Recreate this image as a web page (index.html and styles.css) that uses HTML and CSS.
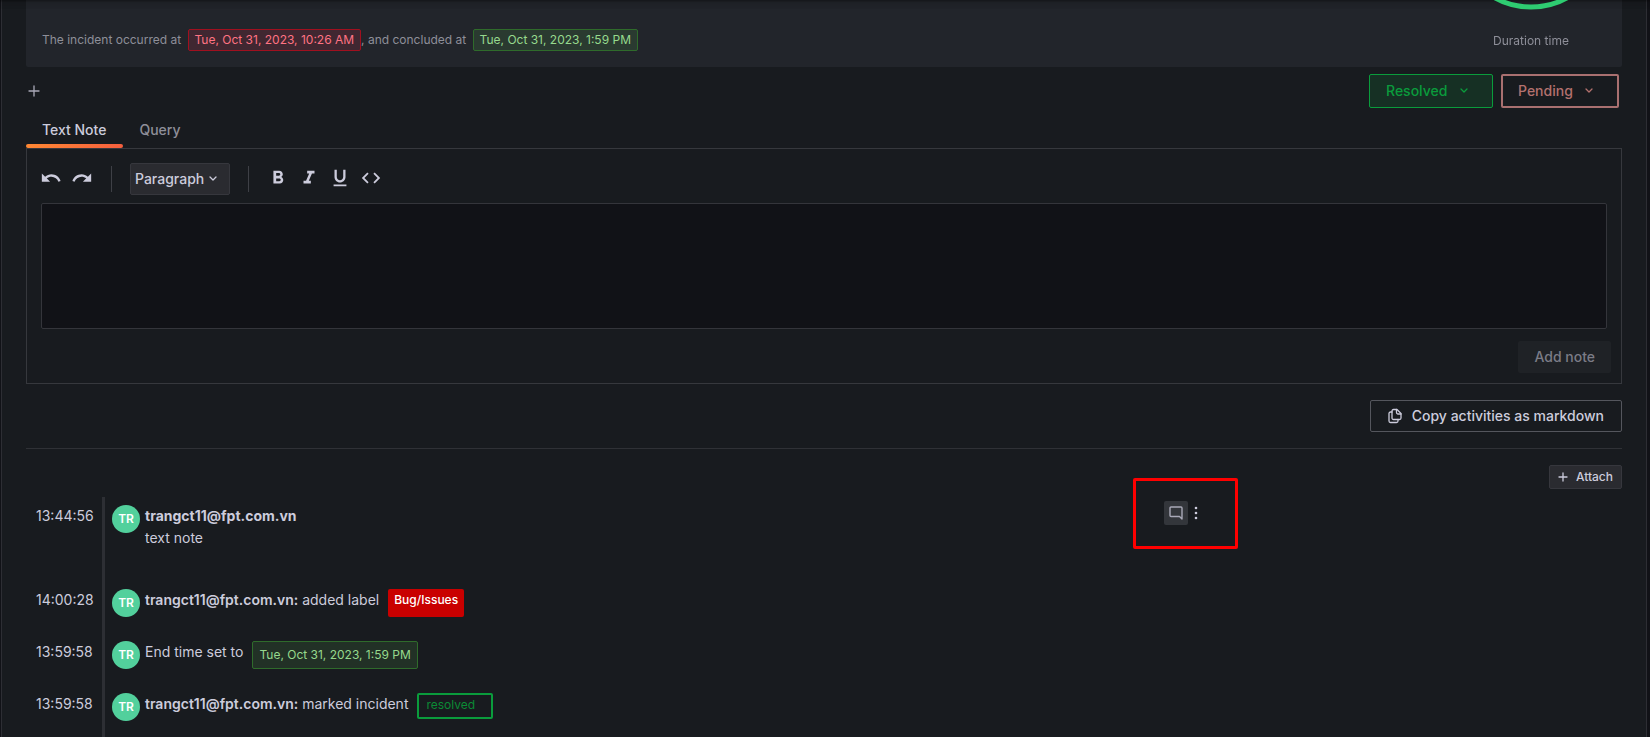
FILE: index.html
```html
<!DOCTYPE html>
<html lang="en">
<head>
    <meta charset="UTF-8">
    <meta name="viewport" content="width=device-width, initial-scale=1.0">
    <title>Incident</title>
    <link rel="stylesheet" href="styles.css">
</head>
<body>
    <main class="page">
        <section class="summary">
            <p class="summary-text">The incident occurred at <span class="date date-start">Tue, Oct 31, 2023, 10:26 AM</span>, and concluded at <span class="date date-end">Tue, Oct 31, 2023, 1:59 PM</span></p>
            <div class="duration">
                <svg class="gauge" width="80" height="10" viewBox="0 0 80 10"><circle cx="40" cy="-67" r="74" fill="none" stroke="#2ecc71" stroke-width="5"/></svg>
                <span>Duration time</span>
            </div>
        </section>

        <div class="actions">
            <button class="icon-button" aria-label="Add label">
                <svg width="12" height="12" viewBox="0 0 12 12"><path d="M6 1v10M1 6h10" stroke="currentColor" stroke-width="1.3" stroke-linecap="round"/></svg>
            </button>
            <div class="statuses">
                <div class="picker picker-resolved">
                    <select aria-label="Status"><option>Resolved</option></select>
                    <svg width="8" height="6" viewBox="0 0 8 6"><path d="M1 1l3 3 3-3" fill="none" stroke="currentColor" stroke-width="1.3" stroke-linecap="round" stroke-linejoin="round"/></svg>
                </div>
                <div class="picker picker-pending">
                    <select aria-label="Severity"><option>Pending</option></select>
                    <svg width="8" height="6" viewBox="0 0 8 6"><path d="M1 1l3 3 3-3" fill="none" stroke="currentColor" stroke-width="1.3" stroke-linecap="round" stroke-linejoin="round"/></svg>
                </div>
            </div>
        </div>

        <nav class="tabs">
            <button class="tab active">Text Note</button>
            <button class="tab">Query</button>
        </nav>

        <section class="note-panel">
            <div class="toolbar">
                <div class="tool-group">
                    <button class="tool" aria-label="Undo"><svg viewBox="0 0 24 24"><path d="M12.5 8c-2.65 0-5.05.99-6.9 2.6L2 7v9h9l-3.62-3.62c1.39-1.16 3.16-1.88 5.12-1.88 3.54 0 6.55 2.31 7.6 5.5l2.37-.78C21.08 11.03 17.15 8 12.5 8z"/></svg></button>
                    <button class="tool" aria-label="Redo"><svg viewBox="0 0 24 24"><path d="M18.4 10.6C16.55 8.99 14.15 8 11.5 8c-4.65 0-8.58 3.03-9.96 7.22L3.9 16c1.05-3.19 4.05-5.5 7.6-5.5 1.95 0 3.73.72 5.12 1.88L13 16h9V7l-3.6 3.6z"/></svg></button>
                </div>
                <span class="divider"></span>
                <div class="picker picker-block">
                    <select aria-label="Block type"><option>Paragraph</option></select>
                    <svg width="8" height="6" viewBox="0 0 8 6"><path d="M1 1l3 3 3-3" fill="none" stroke="currentColor" stroke-width="1.3" stroke-linecap="round" stroke-linejoin="round"/></svg>
                </div>
                <span class="divider"></span>
                <div class="tool-group">
                    <button class="tool" aria-label="Bold"><svg viewBox="0 0 24 24"><path d="M15.6 10.79c.97-.67 1.65-1.77 1.65-2.79 0-2.26-1.75-4-4-4H7v14h7.04c2.09 0 3.71-1.7 3.71-3.79 0-1.52-.86-2.82-2.15-3.42zM10 6.5h3c.83 0 1.5.67 1.5 1.5s-.67 1.5-1.5 1.5h-3v-3zm3.5 9H10v-3h3.5c.83 0 1.5.67 1.5 1.5s-.67 1.5-1.5 1.5z"/></svg></button>
                    <button class="tool" aria-label="Italic"><svg viewBox="0 0 24 24"><path d="M10 4v3h2.21l-3.42 8H6v3h8v-3h-2.21l3.42-8H18V4z"/></svg></button>
                    <button class="tool" aria-label="Underline"><svg viewBox="0 0 24 24"><path d="M12 17c3.31 0 6-2.69 6-6V3h-2.5v8c0 1.93-1.57 3.5-3.5 3.5S8.5 12.93 8.5 11V3H6v8c0 3.31 2.69 6 6 6zm-7 2v2h14v-2H5z"/></svg></button>
                    <button class="tool" aria-label="Code"><svg viewBox="0 0 24 24"><path d="M9.4 16.6L4.8 12l4.6-4.6L8 6l-6 6 6 6 1.4-1.4zm5.2 0l4.6-4.6-4.6-4.6L16 6l6 6-6 6-1.4-1.4z"/></svg></button>
                </div>
            </div>
            <textarea class="editor" aria-label="Note"></textarea>
            <button class="button add-note" disabled>Add note</button>
        </section>

        <div class="copy-row">
            <button class="button copy">
                <svg width="14" height="16" viewBox="0 0 14 16" fill="none" stroke="currentColor" stroke-width="1.3" stroke-linejoin="round" stroke-linecap="round"><path d="M5.5 1.5h3.5l4 4v4.5a1.5 1.5 0 0 1-1.5 1.5h-6A1.5 1.5 0 0 1 4 10V3a1.5 1.5 0 0 1 1.5-1.5z"/><path d="M8.5 1.5v3a1.5 1.5 0 0 0 1.5 1.5h3"/><path d="M4 4H2.5A1.5 1.5 0 0 0 1 5.5V13a1.5 1.5 0 0 0 1.5 1.5h6A1.5 1.5 0 0 0 10 13v-1.5"/></svg>
                Copy activities as markdown
            </button>
        </div>

        <div class="attach-row">
            <button class="button attach">
                <svg width="10" height="10" viewBox="0 0 10 10"><path d="M5 1v8M1 5h8" stroke="currentColor" stroke-width="1.3" stroke-linecap="round"/></svg>
                Attach
            </button>
        </div>

        <ol class="timeline">
            <li class="event">
                <time>13:44:56</time>
                <div class="event-body note">
                    <span class="avatar">TR</span>
                    <div class="event-text">
                        <strong>trangct11@fpt.com.vn</strong>
                        <div>text note</div>
                    </div>
                    <div class="note-tools">
                        <button class="comment" aria-label="Comment">
                            <svg width="14" height="14" viewBox="0 0 14 14"><path d="M2 1h10a1 1 0 0 1 1 1v11l-2.5-2.5H2a1 1 0 0 1-1-1V2a1 1 0 0 1 1-1z" fill="none" stroke="currentColor" stroke-width="1.4" stroke-linejoin="round"/></svg>
                        </button>
                        <button class="more" aria-label="More">
                            <svg width="4" height="14" viewBox="0 0 4 14" fill="currentColor"><circle cx="2" cy="2" r="1.3"/><circle cx="2" cy="7" r="1.3"/><circle cx="2" cy="12" r="1.3"/></svg>
                        </button>
                        <span class="highlight"></span>
                    </div>
                </div>
            </li>
            <li class="event">
                <time>14:00:28</time>
                <div class="event-body">
                    <span class="avatar">TR</span>
                    <div class="event-text"><b>trangct11@fpt.com.vn:</b> added label</div>
                    <span class="label">Bug/Issues</span>
                </div>
            </li>
            <li class="event">
                <time>13:59:58</time>
                <div class="event-body">
                    <span class="avatar">TR</span>
                    <div class="event-text">End time set to</div>
                    <span class="date date-end">Tue, Oct 31, 2023, 1:59 PM</span>
                </div>
            </li>
            <li class="event">
                <time>13:59:58</time>
                <div class="event-body">
                    <span class="avatar">TR</span>
                    <div class="event-text"><b>trangct11@fpt.com.vn:</b> marked incident</div>
                    <span class="state">resolved</span>
                </div>
            </li>
        </ol>
    </main>
</body>
</html>
```
FILE: styles.css
```css
* {
    box-sizing: border-box;
}

body {
    margin: 0;
    padding: 0 3px 0 1px;
    background: #111217;
    color: #ccccdc;
    font-family: Inter, "Liberation Sans", sans-serif;
    font-size: 14px;
    line-height: 22px;
}

/* shadow of the sticky header */
body::before {
    content: '';
    position: fixed;
    top: 0;
    left: 0;
    right: 0;
    height: 9px;
    background: linear-gradient(rgba(0, 0, 0, 0.4), rgba(0, 0, 0, 0.1) 30%, rgba(0, 0, 0, 0.04));
    pointer-events: none;
}

button,
select {
    margin: 0;
    padding: 0;
    border: none;
    background: none;
    color: inherit;
    font: inherit;
    cursor: pointer;
}

select {
    appearance: none;
    outline: none;
}

svg {
    display: block;
    flex: none;
}

.page {
    min-height: 100vh;
    padding: 0 24px;
    background: #181b1f;
    border-left: 1px solid #2d2e34;
    border-right: 1px solid #2d2e34;
}

.summary {
    display: flex;
    justify-content: space-between;
    height: 67px;
    padding: 0 16px;
    background: #22252b;
    border-radius: 0 0 2px 2px;
    color: #8e8f99;
    font-size: 12px;
}

.summary-text {
    margin: 29px 0 0;
}

.summary-text .date {
    margin-left: 3px;
}

/* sits over the header shadow */
.duration {
    position: relative;
    z-index: 1;
    display: flex;
    flex-direction: column;
    align-items: center;
    gap: 20px;
    width: 150px;
}

.date {
    display: inline-block;
    padding: 0 6px;
    border: 1px solid;
    border-radius: 2px;
    font-size: 12px;
    line-height: 20px;
}

.date-start {
    background: #402731;
    border-color: #a0101f;
    color: #ff7383;
}

.date-end {
    background: rgba(86, 166, 75, 0.16);
    border-color: #2f6b2b;
    color: #96d98d;
}

.actions {
    display: flex;
    justify-content: space-between;
    align-items: center;
    padding: 7px 3px 0 2px;
}

.icon-button {
    color: #a9a9b8;
}

.statuses {
    display: flex;
    gap: 8px;
}

.picker {
    display: flex;
    align-items: center;
    border: 1px solid;
    border-radius: 2px;
    font-weight: 500;
}

.picker-resolved,
.picker-pending {
    height: 34px;
    padding: 0 24px 0 16px;
    gap: 12px;
}

.picker-resolved {
    background: #163024;
    color: #0a9c3c;
}

.picker-pending {
    border: 2px solid #a97070;
    padding: 0 24px 0 15px;
    color: #b3716e;
}

.picker-block {
    height: 32px;
    width: 100px;
    padding: 0 4px;
    gap: 4px;
    background: #2a2b30;
    border-color: #36373d;
}

.tabs {
    display: flex;
    margin-top: 12px;
}

.tab {
    position: relative;
    padding: 0 17px 8px 16px;
    color: #8e8f99;
    font-weight: 500;
    line-height: 20px;
}

.tab.active {
    color: #ccccdc;
}

.tab.active::after {
    content: '';
    position: absolute;
    left: 0;
    right: 0;
    bottom: 0;
    height: 4px;
    border-radius: 2px;
    background: linear-gradient(90deg, #ff8833, #f55f3e);
}

.note-panel {
    display: flex;
    flex-direction: column;
    padding: 14px 10px 10px;
    border: 1px solid #36383d;
}

.toolbar {
    display: flex;
    align-items: center;
    margin: 0 3px 8px;
}

.tool-group {
    display: flex;
    gap: 9px;
}

.tool {
    padding-bottom: 2px;
}

.tool svg {
    width: 22px;
    height: 22px;
    fill: currentColor;
}

.divider {
    width: 1px;
    height: 26px;
    margin: 0 18px;
    background: #3e4046;
}

.editor {
    display: block;
    height: 126px;
    margin: 0 4px;
    padding: 8px;
    background: #111217;
    border: 1px solid #34353b;
    border-radius: 2px;
    color: inherit;
    font: inherit;
    resize: none;
}

.button {
    display: flex;
    align-items: center;
    height: 32px;
    padding: 0 16px;
    border-radius: 2px;
    font-weight: 500;
}

.add-note {
    align-self: flex-end;
    margin-top: 12px;
    background: #1f2226;
    color: #7b7c86;
    cursor: default;
}

.copy-row {
    display: flex;
    justify-content: flex-end;
    padding: 16px 0;
    border-bottom: 1px solid #2f3136;
}

.copy {
    gap: 10px;
    padding: 0 17px;
    border: 1px solid #54565d;
}

.attach-row {
    display: flex;
    justify-content: flex-end;
    padding: 16px 0 8px;
}

.attach {
    gap: 8px;
    height: 24px;
    padding: 0 8px;
    background: #2a2b30;
    border: 1px solid #36373d;
    font-size: 12px;
}

.timeline {
    width: 75%;
    margin: 0;
    padding: 0;
    list-style: none;
}

.event {
    display: flex;
}

.event time {
    width: 76px;
    padding: 8px 0 0 10px;
}

.event-body {
    display: flex;
    flex: 1;
    align-items: flex-start;
    min-height: 52px;
    padding: 8px 0 0 7px;
    border-left: 3px solid #2d2f34;
}

.event-body.note {
    min-height: 84px;
}

.avatar {
    width: 28px;
    height: 28px;
    margin-right: 5px;
    border-radius: 50%;
    background: #52d09c;
    color: #fff;
    font-size: 12px;
    font-weight: 600;
    line-height: 28px;
    text-align: center;
}

.event-text {
    margin-right: 9px;
}

.event-text b {
    font-weight: 600;
}

.event-text strong {
    font-weight: 700;
}

.event-body .date {
    line-height: 26px;
}

.label {
    height: 28px;
    padding: 0 6px;
    border-radius: 2px;
    background: #c90000;
    color: #fff;
    font-size: 12px;
    font-weight: 500;
}

.state {
    height: 26px;
    padding: 0 16px 0 7px;
    border: 2px solid #0a9c3c;
    border-radius: 2px;
    color: #0b8a35;
    font-size: 12px;
    line-height: 20px;
}

.note-tools {
    position: relative;
    display: flex;
    align-items: center;
    gap: 5px;
    margin: -4px 24px 0 auto;
}

.comment {
    display: flex;
    align-items: center;
    justify-content: center;
    width: 24px;
    height: 24px;
    border-radius: 2px;
    background: #33363b;
    color: #a9a9b8;
}

.more {
    padding: 0 1px;
}

.highlight {
    position: absolute;
    top: -23px;
    left: -31px;
    width: 105px;
    height: 71px;
    border: 3px solid #ff0000;
    border-radius: 2px;
    pointer-events: none;
}
```
